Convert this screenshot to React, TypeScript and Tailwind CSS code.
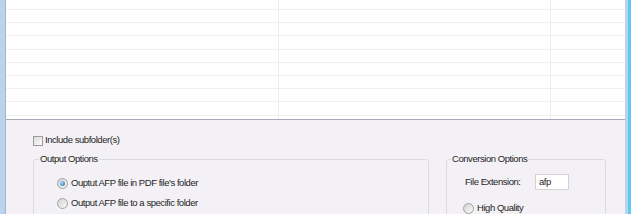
import React from 'react';

const rowHeights = [10, 13.2, 13.2, 13.2, 13.2, 13.2, 13.2, 13.2, 13.2, 10];

function Radio({ checked }: { checked?: boolean }) {
  return (
    <span className="flex items-center justify-center w-[11px] h-[11px] rounded-full border border-[#a2a2a2] bg-[linear-gradient(135deg,#d4d4d4,#f7f7f7)] shrink-0">
      {checked && (
        <span className="block w-[5px] h-[5px] rounded-full bg-[radial-gradient(circle_at_35%_35%,#a9dcfa,#2063ad)]" />
      )}
    </span>
  );
}

export default function App() {
  return (
    <div
      className="flex w-[631px] h-[214px] overflow-hidden text-[9.5px] tracking-[-0.45px] text-[#1e1e1e]"
      style={{ fontFamily: '"Liberation Sans", Arial, sans-serif' }}
    >
      <div className="w-[6px] bg-[#bcd3ec] border-r border-[#a3b7cf]" />

      <div className="flex-1 flex flex-col bg-[#f3f1f5] overflow-hidden">
        {/* file list */}
        <div className="h-[120px] shrink-0 bg-white border-b border-[#a9acb8] overflow-hidden">
          {rowHeights.map((h, i) => (
            <div
              key={i}
              className="flex border-b border-[#f0f0f0]"
              style={{ height: h }}
            >
              <div className="w-[273px] border-r border-[#ededed]" />
              <div className="w-[272px] border-r border-[#ededed]" />
              <div className="flex-1" />
            </div>
          ))}
        </div>

        {/* options */}
        <div className="pl-[27px] pt-[15px]">
          <label className="flex items-center gap-[2px] h-[11px]">
            <span className="w-[10px] h-[10px] border border-[#9c9c9c] bg-[linear-gradient(135deg,#dcdcdc,#fbfbfb)]" />
            <span>Include subfolder(s)</span>
          </label>

          <div className="flex gap-[17px] mt-[7px]">
            <fieldset className="w-[396px] h-[80px] shrink-0 border border-[#dbdbdb] rounded-[3px]">
              <legend className="ml-[5px] px-[1px] leading-[12px]">Output Options</legend>
              <div className="flex flex-col gap-[6px] pl-[23px] pt-[11px]">
                <div className="flex items-center gap-[3px] h-[14px]">
                  <Radio checked />
                  <span>Ouptut AFP file in PDF file's folder</span>
                </div>
                <div className="flex items-center gap-[3px] h-[14px]">
                  <Radio />
                  <span>Output AFP file to a specific folder</span>
                </div>
              </div>
            </fieldset>

            <fieldset className="w-[160px] h-[80px] shrink-0 border border-[#dbdbdb] rounded-[3px]">
              <legend className="ml-[4px] px-[1px] leading-[12px]">Conversion Options</legend>
              <div className="pl-[16px] pt-[9px]">
                <div className="flex items-center h-[16px]">
                  <span className="w-[72px] pl-[2px]">File Extension:</span>
                  <div className="w-[34px] h-[16px] bg-white border border-[#d2d2d2] flex items-center pl-[3px]">
                    afp
                  </div>
                </div>
                <div className="flex items-center gap-[3px] h-[14px] mt-[11px]">
                  <Radio />
                  <span>High Quality</span>
                </div>
              </div>
            </fieldset>
          </div>
        </div>
      </div>

      <div className="flex">
        <div className="w-[3px] bg-[#bcd3ec]" />
        <div className="w-[3px] bg-[#5ec9f4]" />
      </div>
    </div>
  );
}
